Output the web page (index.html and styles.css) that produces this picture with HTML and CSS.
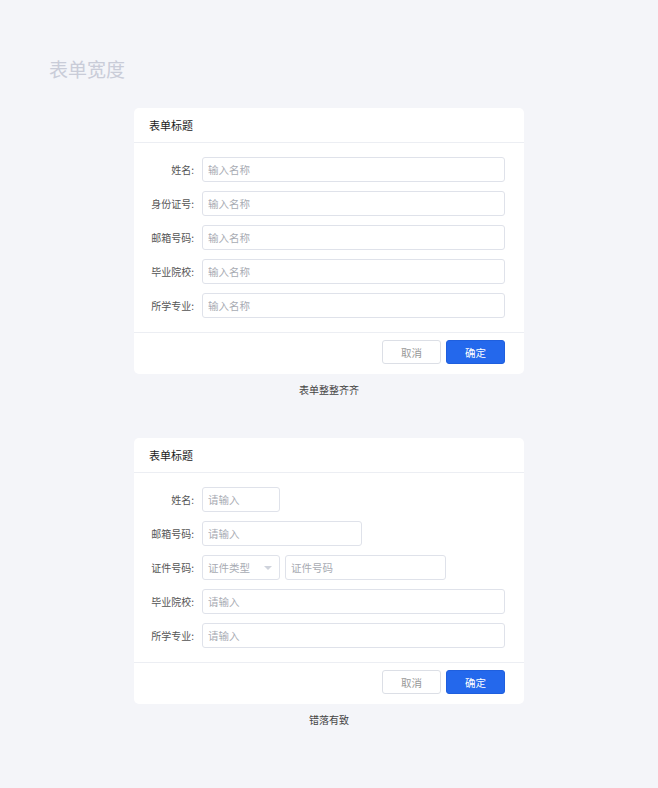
FILE: index.html
```html
<!DOCTYPE html>
<html lang="zh">
<head>
<meta charset="utf-8">
<title>表单宽度</title>
<link rel="stylesheet" href="styles.css">
</head>
<body>
<h1 class="page-title">表单宽度</h1>

<section class="demo">
  <div class="card">
    <div class="card-header">表单标题</div>
    <div class="card-body">
      <div class="row"><label class="label">姓名:</label><input class="input w-full" placeholder="输入名称"></div>
      <div class="row"><label class="label">身份证号:</label><input class="input w-full" placeholder="输入名称"></div>
      <div class="row"><label class="label">邮箱号码:</label><input class="input w-full" placeholder="输入名称"></div>
      <div class="row"><label class="label">毕业院校:</label><input class="input w-full" placeholder="输入名称"></div>
      <div class="row"><label class="label">所学专业:</label><input class="input w-full" placeholder="输入名称"></div>
    </div>
    <div class="card-footer">
      <button class="btn btn-cancel">取消</button>
      <button class="btn btn-primary">确定</button>
    </div>
  </div>
  <p class="caption">表单整整齐齐</p>
</section>

<section class="demo demo-second">
  <div class="card">
    <div class="card-header">表单标题</div>
    <div class="card-body">
      <div class="row"><label class="label">姓名:</label><input class="input w-s" placeholder="请输入"></div>
      <div class="row"><label class="label">邮箱号码:</label><input class="input w-m" placeholder="请输入"></div>
      <div class="row"><label class="label">证件号码:</label>
        <div class="controls">
          <div class="select w-s"><span class="select-text">证件类型</span><span class="caret"></span></div>
          <input class="input w-m2" placeholder="证件号码">
        </div>
      </div>
      <div class="row"><label class="label">毕业院校:</label><input class="input w-full" placeholder="请输入"></div>
      <div class="row"><label class="label">所学专业:</label><input class="input w-full" placeholder="请输入"></div>
    </div>
    <div class="card-footer">
      <button class="btn btn-cancel">取消</button>
      <button class="btn btn-primary">确定</button>
    </div>
  </div>
  <p class="caption">错落有致</p>
</section>
</body>
</html>
```

FILE: styles.css
```css
* { box-sizing: border-box; }

html, body {
  margin: 0;
  padding: 0;
  background: #f4f5f9;
  font-family: "Noto Sans CJK SC", "Noto Sans", "Liberation Sans", sans-serif;
  color: #333;
}

.page-title {
  margin: 0;
  padding: 57px 0 0 49px;
  font-size: 19px;
  line-height: 24px;
  font-weight: 400;
  color: #c9ccd8;
}

.demo {
  margin: 27px 0 0 134px;
  width: 390px;
}

.demo-second {
  margin-top: 42px;
}

.card {
  background: #fff;
  border-radius: 5px;
}

.card-header {
  height: 35px;
  padding: 0 15px;
  display: flex;
  align-items: center;
  font-size: 11px;
  color: #222;
  border-bottom: 1px solid #eceef3;
}

.card-body {
  padding: 14px 19px 14px 0;
  display: flex;
  flex-direction: column;
  gap: 9px;
}

.row {
  display: flex;
  align-items: center;
  height: 25px;
}

.label {
  width: 60px;
  margin-right: 8px;
  text-align: right;
  font-size: 10px;
  color: #555;
  white-space: nowrap;
}

.controls {
  display: flex;
  gap: 5px;
}

.input, .select {
  height: 25px;
  border: 1px solid #dfe2ea;
  border-radius: 3px;
  padding: 0 5px;
  font-family: inherit;
  font-size: 10.5px;
  color: #333;
  background: #fff;
  outline: none;
}

.input::placeholder { color: #a8abb3; }

.w-full { width: 303px; }
.w-s { width: 78px; }
.w-m { width: 160px; }
.w-m2 { width: 161px; }

.select {
  display: flex;
  align-items: center;
  justify-content: space-between;
  padding-right: 7px;
}

.select-text { color: #a8abb3; }

.caret {
  width: 0;
  height: 0;
  border-left: 4px solid transparent;
  border-right: 4px solid transparent;
  border-top: 4px solid #cfd3dc;
}

.card-footer {
  border-top: 1px solid #eceef3;
  padding: 7px 19px 10px 0;
  display: flex;
  justify-content: flex-end;
  gap: 5px;
}

.btn {
  width: 59px;
  height: 24px;
  border-radius: 3px;
  font-family: inherit;
  font-size: 10.5px;
  padding: 0;
  cursor: pointer;
}

.btn-cancel {
  background: #fff;
  border: 1px solid #dcdfe6;
  color: #999;
}

.btn-primary {
  background: #2468ec;
  border: 1px solid #1f5fde;
  color: #fff;
}

.caption {
  margin: 10px 0 0;
  text-align: center;
  font-size: 10px;
  line-height: 12px;
  color: #444;
}
```
